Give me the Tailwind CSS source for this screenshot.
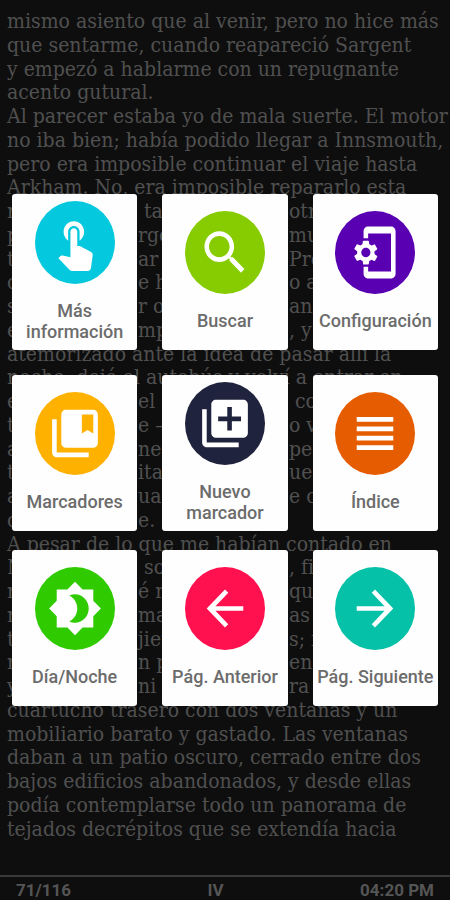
<!DOCTYPE html>
<html lang="es">
<head>
<meta charset="utf-8">
<meta name="viewport" content="width=device-width, initial-scale=1">
<title>Lector</title>
<script src="https://cdn.jsdelivr.net/npm/@tailwindcss/browser@4"></script>
</head>
<body class="bg-[#0e0e0e]">
<main class="relative flex min-h-screen flex-col font-['Roboto','Liberation_Sans',sans-serif]">

<!-- Book page: one paragraph element per printed line, spread over the page height -->
<article class="flex flex-1 flex-col justify-between overflow-hidden px-[7px] pt-[10px] pb-[34px] font-['DejaVu_Serif_Condensed','DejaVu_Serif',serif] text-[21px] leading-[23px] whitespace-nowrap text-[#505050]">
<p>mismo asiento que al venir, pero no hice más</p>
<p>que sentarme, cuando reapareció Sargent</p>
<p>y empezó a hablarme con un repugnante</p>
<p>acento gutural.</p>
<p>Al parecer estaba yo de mala suerte. El motor</p>
<p>no iba bien; había podido llegar a Innsmouth,</p>
<p>pero era imposible continuar el viaje hasta</p>
<p>Arkham. No, era imposible repararlo esta</p>
<p class="grid grid-cols-[131px_151px_1fr]"><span>noche, y</span><span>&nbsp;tampoco</span><span>otro medio</span></p>
<p class="grid grid-cols-[131px_151px_1fr]"><span>pero Sa</span><span>rgent sentía</span><span>mucho, yo</span></p>
<p class="grid grid-cols-[131px_151px_1fr]"><span>tenía par</span><span>ar en Gilman.</span><span>Probable</span></p>
<p class="grid grid-cols-[131px_151px_1fr]"><span>conserj</span><span>e haría preci</span><span>o asequible</span></p>
<p class="grid grid-cols-[131px_151px_1fr]"><span>se hace</span><span>r otra cosa.</span><span>anonadado</span></p>
<p class="grid grid-cols-[131px_151px_1fr]"><span>este co</span><span>mprevisto</span><span>, y realmente</span></p>
<p>atemorizado ante la idea de pasar allí la</p>
<p>noche, dejé el autobús y volví a entrar en</p>
<p class="grid grid-cols-[131px_151px_1fr]"><span>entré en</span><span>el hotel, el</span><span>&nbsp;conserje</span></p>
<p class="grid grid-cols-[131px_151px_1fr]"><span>turno noch</span><span>e – un hosc</span><span>o viejo</span></p>
<p class="grid grid-cols-[131px_151px_1fr]"><span>aspecto, di</span><span>ne cuarto del</span><span>penúltimo</span></p>
<p class="grid grid-cols-[131px_151px_1fr]"><span>tenía hab</span><span>itación 428, q</span><span>ue grande</span></p>
<p class="grid grid-cols-[131px_151px_1fr]"><span>aunque ag</span><span>ua corrient</span><span>e costaba</span></p>
<p class="grid grid-cols-[131px_151px_1fr]"><span>cada noch</span><span>e.</span></p>
<p>A pesar de lo que me habían contado en</p>
<p class="grid grid-cols-[131px_151px_1fr]"><span>Newbury</span><span>&nbsp;sobre hotel</span><span>, firmé el</span></p>
<p class="grid grid-cols-[131px_151px_1fr]"><span>recib pagu</span><span>é mi dólar y</span><span>que cogiera</span></p>
<p class="grid grid-cols-[131px_151px_1fr]"><span>mi</span><span>maleta y subí</span><span>as escaleras</span></p>
<p class="grid grid-cols-[131px_151px_1fr]"><span>tres cru</span><span>jientes</span><span>s; finalmente</span></p>
<p class="grid grid-cols-[131px_151px_1fr]"><span>recorrí u</span><span>n pasillo</span><span>en silencio</span></p>
<p class="grid grid-cols-[131px_151px_1fr]"><span>y sin vida</span><span>ni luz. Mi e</span><span>ra vivienda</span></p>
<p>cuartucho trasero con dos ventanas y un</p>
<p>mobiliario barato y gastado. Las ventanas</p>
<p>daban a un patio oscuro, cerrado entre dos</p>
<p>bajos edificios abandonados, y desde ellas</p>
<p>podía contemplarse todo un panorama de</p>
<p>tejados decrépitos que se extendía hacia</p>
</article>

<footer class="flex justify-between border-t-2 border-[#3a3a3a] px-4 pt-[3px] text-[17px] leading-[20px] font-bold text-[#555555]">
<span>71/116</span><span>IV</span><span>04:20 PM</span>
</footer>

<!-- Reader menu laid over the page -->
<nav aria-label="Menú" class="absolute inset-0 flex flex-col justify-center px-3 text-[18px] leading-[21px] font-medium text-[#6c6c6c]">
<div class="grid grid-cols-3 gap-x-[25px]">
<button type="button" class="flex h-[156px] flex-col items-center justify-center gap-4 rounded-[3px] bg-[#fefefe] pb-[2px]">
<svg class="h-[83px] w-20 shrink-0 text-[#04c8dd]" viewBox="0 0 35 35" preserveAspectRatio="none" aria-hidden="true"><circle cx="17.5" cy="17.5" r="17.5" fill="currentColor"/><path transform="translate(5.5 5.5)" fill="#fff" d="M9 11.24V7.5C9 6.12 10.12 5 11.5 5S14 6.12 14 7.5v3.74c1.21-.81 2-2.18 2-3.74C16 5.01 13.99 3 11.5 3S7 5.01 7 7.5c0 1.56.79 2.93 2 3.74zm9.84 4.63l-4.54-2.26c-.17-.07-.35-.11-.54-.11H13v-6c0-.83-.67-1.5-1.5-1.5S10 6.67 10 7.5v10.74l-3.43-.72c-.08-.01-.15-.03-.24-.03-.31 0-.59.13-.79.33l-.79.8 4.94 4.94c.27.27.65.44 1.06.44h6.79c.75 0 1.33-.55 1.44-1.28l.75-5.27c.01-.07.02-.14.02-.2 0-.62-.38-1.16-.91-1.38z"/></svg>
<span>Más<br>información</span></button>
<button type="button" class="flex h-[156px] flex-col items-center justify-center gap-4 rounded-[3px] bg-[#fefefe] pb-[2px]">
<svg class="h-[83px] w-20 shrink-0 text-[#87cc00]" viewBox="0 0 35 35" preserveAspectRatio="none" aria-hidden="true"><circle cx="17.5" cy="17.5" r="17.5" fill="currentColor"/><path transform="translate(5.5 5.5)" fill="#fff" d="M15.5 14h-.79l-.28-.27C15.41 12.59 16 11.11 16 9.5 16 5.91 13.09 3 9.5 3S3 5.91 3 9.5 5.91 16 9.5 16c1.61 0 3.09-.59 4.23-1.57l.27.28v.79l5 4.99L20.49 19l-4.99-5zm-6 0C7.01 14 5 11.99 5 9.5S7.01 5 9.5 5 14 7.01 14 9.5 11.99 14 9.5 14z"/></svg>
<span>Buscar</span></button>
<button type="button" class="flex h-[156px] flex-col items-center justify-center gap-4 rounded-[3px] bg-[#fefefe] pb-[2px]">
<svg class="h-[83px] w-20 shrink-0 text-[#5900b3]" viewBox="0 0 35 35" preserveAspectRatio="none" aria-hidden="true"><circle cx="17.5" cy="17.5" r="17.5" fill="currentColor"/><path transform="translate(5.5 5.5)" fill="#fff" d="M11.8 12.5v-1l1.1-.8c.1-.1.1-.2.1-.3l-1-1.7c-.1-.1-.2-.2-.3-.1l-1.3.4c-.3-.2-.6-.4-.9-.5l-.2-1.3c0-.1-.1-.2-.3-.2H7c-.1 0-.2.1-.3.2l-.2 1.3c-.3.1-.6.3-.9.5l-1.3-.5c-.1 0-.2 0-.3.1l-1 1.7c-.1.1 0 .2.1.3l1.1.9v1l-1.1.8c-.1.2-.1.3-.1.4l1 1.7c.1.1.2.2.3.1l1.4-.4c.3.2.6.4.9.5l.2 1.3c-.1.1.1.2.2.2h2c.1 0 .2-.1.3-.2l.2-1.3c.3-.1.6-.3.9-.5l1.3.5c.1 0 .2 0 .3-.1l1-1.7c.1-.1 0-.2-.1-.3l-1.1-.9zM8 14c-1.1 0-2-.9-2-2s.9-2 2-2 2 .9 2 2-.9 2-2 2zM19 1H9c-1.1 0-2 .9-2 2v3h2V4h10v16H9v-2H7v3c0 1.1.9 2 2 2h10c1.1 0 2-.9 2-2V3c0-1.1-.9-2-2-2z"/></svg>
<span>Configuración</span></button>
</div>
<div class="mt-[25px] grid grid-cols-3 gap-x-[25px]">
<button type="button" class="flex h-[156px] flex-col items-center justify-center gap-4 rounded-[3px] bg-[#fefefe] pb-[2px]">
<svg class="h-[83px] w-20 shrink-0 text-[#ffb100]" viewBox="0 0 35 35" preserveAspectRatio="none" aria-hidden="true"><circle cx="17.5" cy="17.5" r="17.5" fill="currentColor"/><path transform="translate(5.5 5.5)" fill="#fff" d="M4 6H2v14c0 1.1.9 2 2 2h14v-2H4V6zM20 2H8c-1.1 0-2 .9-2 2v12c0 1.1.9 2 2 2h12c1.1 0 2-.9 2-2V4c0-1.1-.9-2-2-2zm0 10l-2.5-1.5L15 12V4h5v8z"/></svg>
<span>Marcadores</span></button>
<button type="button" class="flex h-[156px] flex-col items-center justify-center gap-4 rounded-[3px] bg-[#fefefe] pb-[2px]">
<svg class="h-[83px] w-20 shrink-0 text-[#20233d]" viewBox="0 0 35 35" preserveAspectRatio="none" aria-hidden="true"><circle cx="17.5" cy="17.5" r="17.5" fill="currentColor"/><path transform="translate(5.5 5.5)" fill="#fff" d="M4 6H2v14c0 1.1.9 2 2 2h14v-2H4V6zm16-4H8c-1.1 0-2 .9-2 2v12c0 1.1.9 2 2 2h12c1.1 0 2-.9 2-2V4c0-1.1-.9-2-2-2zm-1 9h-4v4h-2v-4H9V9h4V5h2v4h4v2z"/></svg>
<span>Nuevo<br>marcador</span></button>
<button type="button" class="flex h-[156px] flex-col items-center justify-center gap-4 rounded-[3px] bg-[#fefefe] pb-[2px]">
<svg class="h-[83px] w-20 shrink-0 text-[#e65c00]" viewBox="0 0 35 35" preserveAspectRatio="none" aria-hidden="true"><circle cx="17.5" cy="17.5" r="17.5" fill="currentColor"/><path transform="translate(5.5 5.5)" fill="#fff" d="M4 15h16v-2H4v2zm0 4h16v-2H4v2zm0-8h16V9H4v2zm0-6v2h16V5H4z"/></svg>
<span>Índice</span></button>
</div>
<div class="mt-[19px] grid grid-cols-3 gap-x-[25px]">
<button type="button" class="flex h-[156px] flex-col items-center justify-center gap-4 rounded-[3px] bg-[#fefefe] pb-[2px]">
<svg class="h-[83px] w-20 shrink-0 text-[#2fcb00]" viewBox="0 0 35 35" preserveAspectRatio="none" aria-hidden="true"><circle cx="17.5" cy="17.5" r="17.5" fill="currentColor"/><path transform="translate(5.5 5.5)" fill="#fff" d="M20 8.69V4h-4.69L12 .69 8.69 4H4v4.69L.69 12 4 15.31V20h4.69L12 23.31 15.31 20H20v-4.69L23.31 12 20 8.69zM12 18c-.89 0-1.74-.2-2.5-.55C11.56 16.5 13 14.42 13 12s-1.44-4.5-3.5-5.45C10.26 6.2 11.11 6 12 6c3.31 0 6 2.69 6 6s-2.69 6-6 6z"/></svg>
<span>Día/Noche</span></button>
<button type="button" class="flex h-[156px] flex-col items-center justify-center gap-4 rounded-[3px] bg-[#fefefe] pb-[2px]">
<svg class="h-[83px] w-20 shrink-0 text-[#ff1150]" viewBox="0 0 35 35" preserveAspectRatio="none" aria-hidden="true"><circle cx="17.5" cy="17.5" r="17.5" fill="currentColor"/><path transform="translate(5.5 5.5)" fill="#fff" d="M20 11H7.83l5.59-5.59L12 4l-8 8 8 8 1.41-1.41L7.83 13H20v-2z"/></svg>
<span>Pág. Anterior</span></button>
<button type="button" class="flex h-[156px] flex-col items-center justify-center gap-4 rounded-[3px] bg-[#fefefe] pb-[2px]">
<svg class="h-[83px] w-20 shrink-0 text-[#04c1a8]" viewBox="0 0 35 35" preserveAspectRatio="none" aria-hidden="true"><circle cx="17.5" cy="17.5" r="17.5" fill="currentColor"/><path transform="translate(5.5 5.5)" fill="#fff" d="M12 4l-1.41 1.41L16.17 11H4v2h12.17l-5.58 5.59L12 20l8-8z"/></svg>
<span>Pág. Siguiente</span></button>
</div>
</nav>
</main>
</body>
</html>
